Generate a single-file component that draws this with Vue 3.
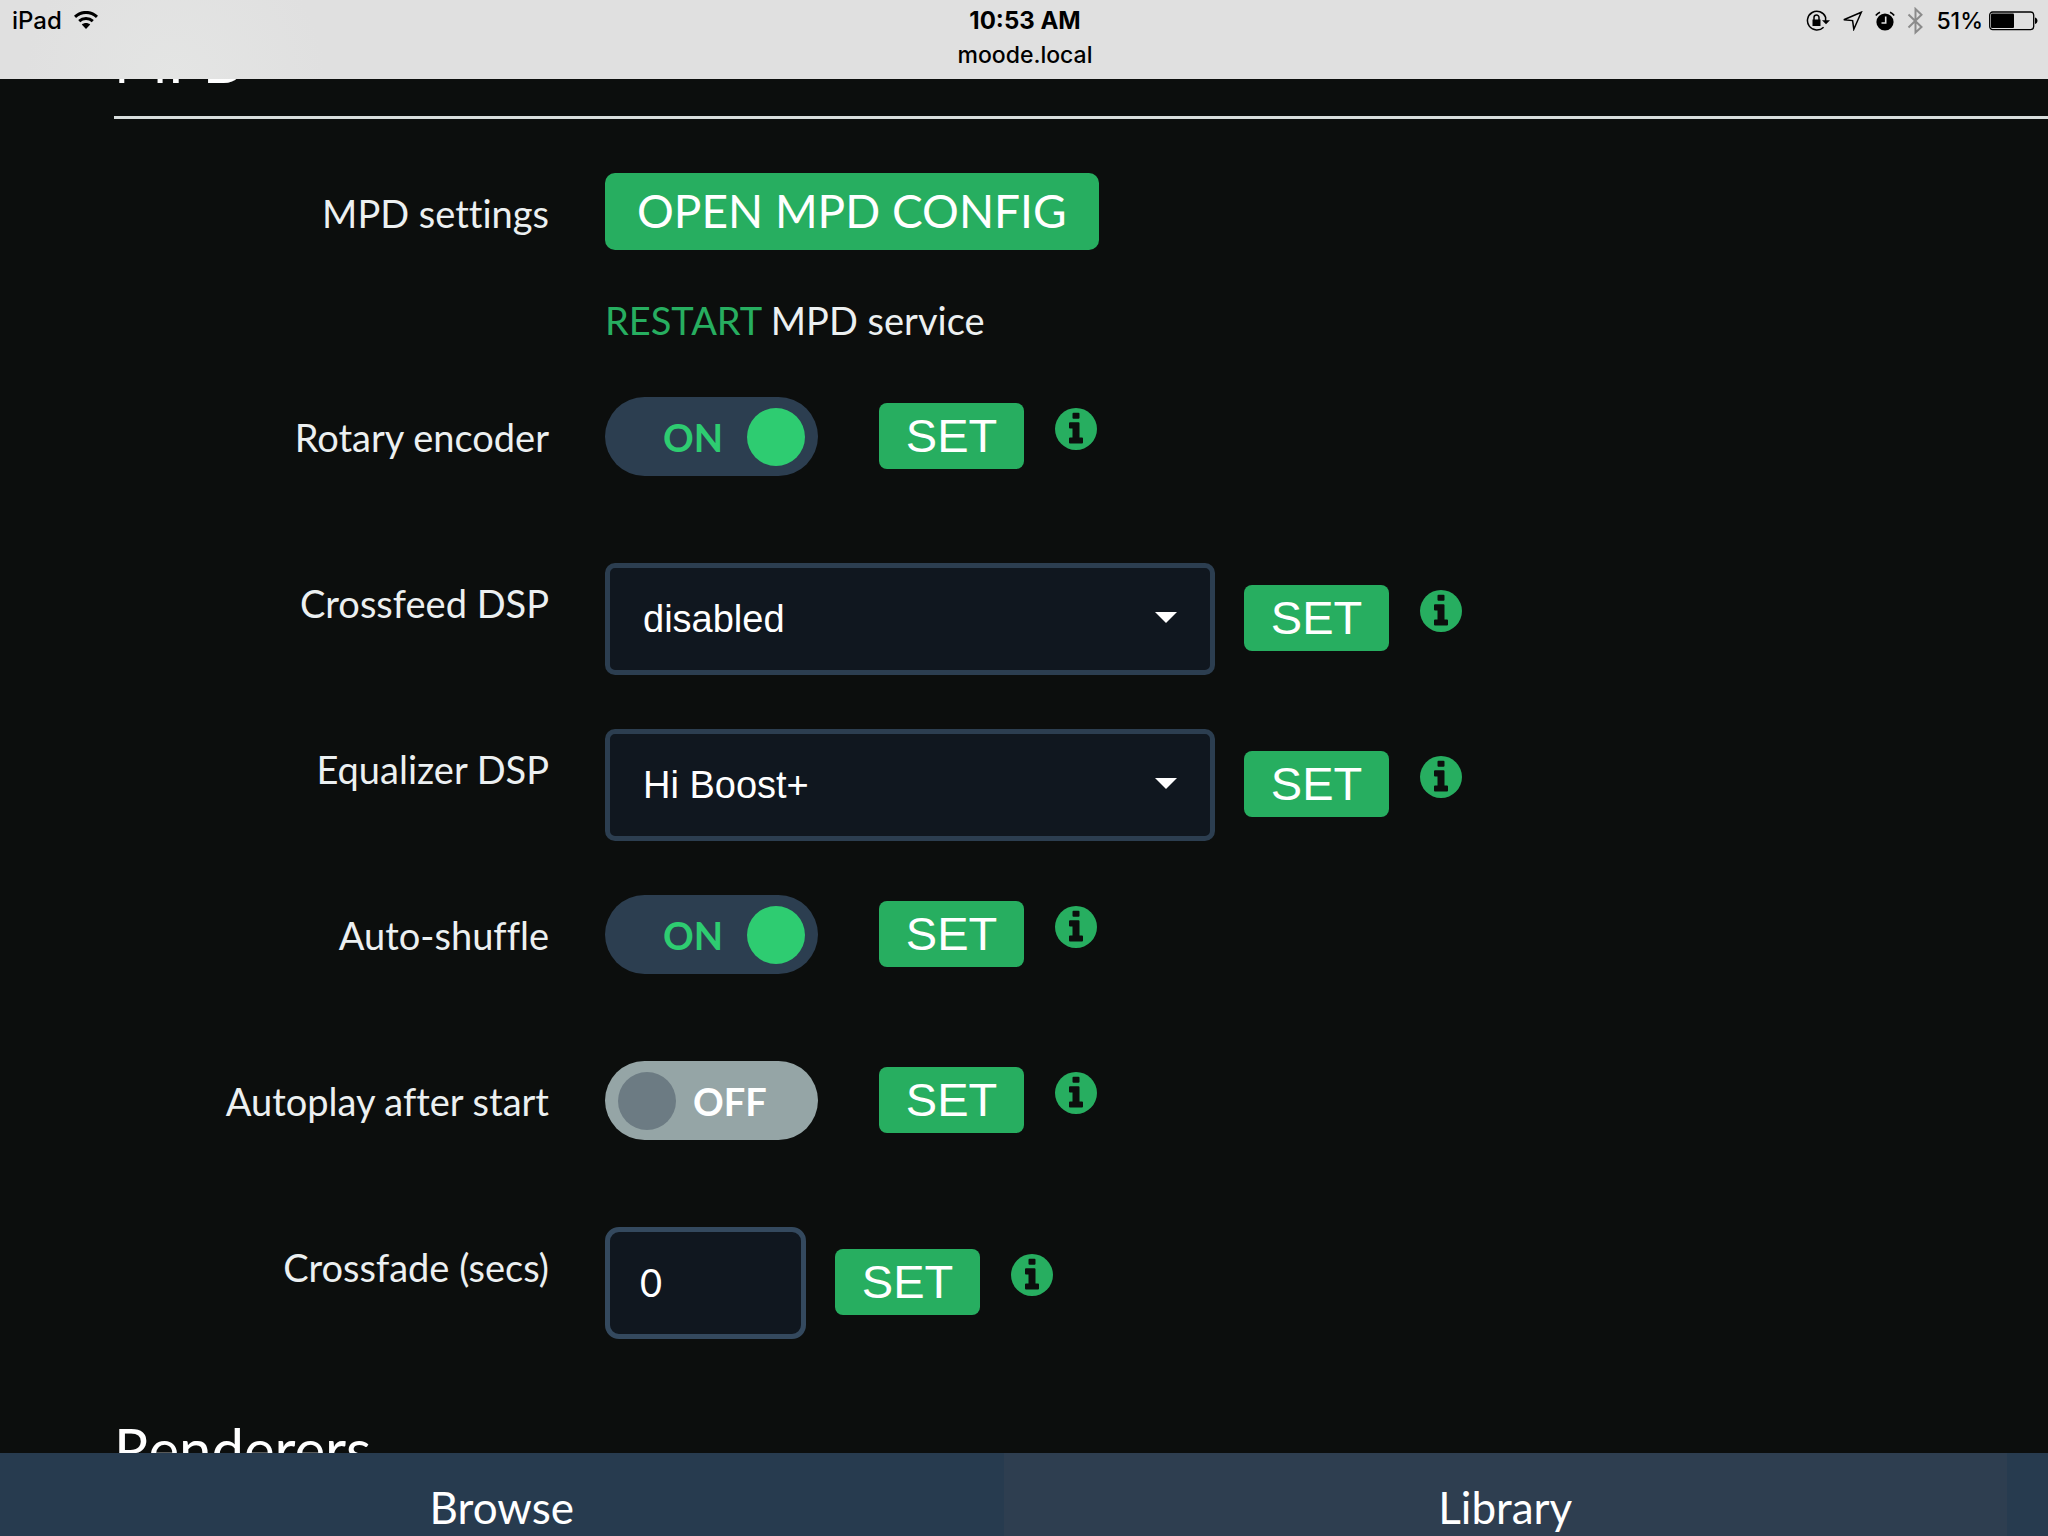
<script setup>
import { reactive } from 'vue'

const settings = reactive([
  { id: 'rotary', label: 'Rotary encoder', type: 'switch', value: true },
  { id: 'crossfeed', label: 'Crossfeed DSP', type: 'select', value: 'disabled' },
  { id: 'equalizer', label: 'Equalizer DSP', type: 'select', value: 'Hi Boost+' },
  { id: 'shuffle', label: 'Auto-shuffle', type: 'switch', value: true },
  { id: 'autoplay', label: 'Autoplay after start', type: 'switch', value: false },
  { id: 'crossfade', label: 'Crossfade (secs)', type: 'text', value: '0' }
])
</script>

<template>
  <div class="screen">
    <header class="status">
      <div class="side">
        <span class="device">iPad</span>
        <svg class="wifi" width="24" height="18" viewBox="0 0 24 18" aria-hidden="true">
          <g fill="none" stroke="#000" stroke-width="3">
            <path d="M1 5.9C7.2-.1 16.800-.1 23 5.900" />
            <path d="M5.200 10.200C9 6.700 15 6.700 18.800 10.200" />
          </g>
          <path d="M12 18L7.800 13.600C10.200 11.600 13.800 11.600 16.200 13.600Z" />
        </svg>
      </div>
      <div class="center">
        <span class="time">10:53 AM</span>
        <span>moode.local</span>
      </div>
      <div class="side right">
        <svg width="24" height="22" viewBox="0 0 24 22" aria-hidden="true">
          <path d="M19.600 7.200A9.400 9.400 0 1 0 17.600 17.200" fill="none" stroke="#000" stroke-width="1.500" />
          <path d="M19.600 7V11" fill="none" stroke="#000" stroke-width="1.500" />
          <path d="M16 10.200H24L20 14.200Z" />
          <path d="M6.500 9.500H14.500V16H6.500Z" />
          <path d="M8 10V7.500a2.500 2.500 0 0 1 5 0V10" fill="none" stroke="#000" stroke-width="1.500" />
        </svg>
        <svg width="21" height="20" viewBox="0 0 21 20" aria-hidden="true">
          <path d="M19.300 1.200L1.800 8.800L10.600 9.600L11.800 18.200Z" fill="none" stroke="#000" stroke-width="1.500" />
        </svg>
        <svg width="20" height="20" viewBox="0 0 20 20" aria-hidden="true">
          <circle cx="10" cy="11" r="8.600" />
          <path d="M.8 4.600A11 11 0 0 1 5 1.200M15 1.200A11 11 0 0 1 19.200 4.600" fill="none" stroke="#000" stroke-width="1.600" />
          <path d="M10.700 5.500V12H6.500" fill="none" stroke="#e0e0e0" stroke-width="1.600" />
        </svg>
        <svg width="17" height="28" viewBox="0 0 17 28" aria-hidden="true">
          <path d="M1.500 7.500L14.500 20L8.500 25.500V2L14.500 7.800L1.500 20.500" fill="none" stroke="#8b8b8b" stroke-width="2" />
        </svg>
        <span class="percent">51%</span>
        <svg width="49" height="20" viewBox="0 0 49 20" aria-hidden="true">
          <rect x=".7" y="1" width="44" height="17.600" rx="3" fill="none" stroke="#000" stroke-width="1.300" />
          <rect x="2" y="2.500" width="23" height="14.600" rx="1" />
          <path d="M46 6.500C49.300 7 49.300 12.500 46 13Z" />
        </svg>
      </div>
    </header>

    <main class="content">
      <h2 class="heading first">MPD</h2>

      <div class="row config">
        <span class="label">MPD settings</span>
        <button type="button" class="open">OPEN MPD CONFIG</button>
      </div>
      <div class="row restart">
        <span class="label"></span>
        <p><a href="#restart">RESTART</a> MPD service</p>
      </div>

      <form class="rows" @submit.prevent>
        <div v-for="s in settings" :key="s.id" class="row">
          <label class="label" :for="s.id">{{ s.label }}</label>
          <div class="controls" :class="s.type">
            <div v-if="s.type === 'switch'" class="toggle" :class="{ on: s.value }">
              <input :id="s.id" v-model="s.value" type="checkbox">
              <span class="state">{{ s.value ? 'ON' : 'OFF' }}</span>
              <span class="knob"></span>
            </div>
            <div v-else-if="s.type === 'select'" class="picker">
              <select :id="s.id" v-model="s.value">
                <option>{{ s.value }}</option>
              </select>
              <span class="caret"></span>
            </div>
            <input v-else :id="s.id" v-model="s.value" class="number" type="text" inputmode="numeric">

            <div class="actions">
              <button type="submit" class="set">SET</button>
              <button type="button" class="info" :aria-label="'About ' + s.label">
                <svg width="42" height="42" viewBox="0 0 42 42" aria-hidden="true">
                  <circle cx="21" cy="21" r="21" fill="#27ae60" />
                  <path d="M18.500 4.700h5a1 1 0 0 1 1 1v4a1 1 0 0 1-1 1h-5a1 1 0 0 1-1-1v-4a1 1 0 0 1 1-1ZM15 14.200h8.500a1 1 0 0 1 1 1V29.500H27a1 1 0 0 1 1 1v4a1 1 0 0 1-1 1H15a1 1 0 0 1-1-1v-4a1 1 0 0 1 1-1h2.500V20.500H15a1 1 0 0 1-1-1v-4.300a1 1 0 0 1 1-1Z" fill="#0c0e0d" />
                </svg>
              </button>
            </div>
          </div>
        </div>
      </form>

      <h2 class="heading">Renderers</h2>
    </main>

    <nav class="tabs">
      <a href="#browse" class="active">Browse</a>
      <a href="#library">Library</a>
    </nav>
  </div>
</template>

<style>
body {
  margin: 0;
  background: #0c0e0d;
}
</style>

<style scoped>
* {
  box-sizing: border-box;
}

.screen {
  display: flex;
  flex-direction: column;
  height: 100vh;
  overflow: hidden;
  background: #0c0e0d;
  color: #ecf0f1;
  font: 38px/46px Lato, "Noto Sans", sans-serif;
  font-variant-ligatures: none;
}

.status {
  display: flex;
  flex: none;
  height: 79px;
  padding: 4px 10px 0 12px;
  background: radial-gradient(circle at 175px 79px, #e4e5e4, #e0e0e0 150px);
  color: #000;
  font: 500 23px/34px Inter, "Liberation Sans", sans-serif;
}

.side {
  display: flex;
  flex: 1;
  align-items: center;
  height: 34px;
  gap: 12px;
}

.device {
  font-size: 24px;
}

.right {
  justify-content: flex-end;
}

.wifi {
  margin-bottom: 2px;
}

.percent {
  margin-right: -6px;
}

.center {
  display: flex;
  flex-direction: column;
  align-items: center;
}

.time {
  font-size: 24px;
  font-weight: 700;
}

.content {
  flex: 1;
  min-height: 0;
  overflow: hidden;
}

.heading {
  margin: 74px 0 0 114px;
  color: #fff;
  font-size: 58px;
  font-weight: 400;
  line-height: 72px;
}

.heading.first {
  height: 94px;
  margin-top: -54px;
  border-bottom: 3px solid #d8dddc;
}

.row {
  display: flex;
  align-items: flex-start;
  gap: 56px;
}

.label {
  flex: none;
  width: 549px;
  padding-top: 17px;
  text-align: right;
}

.config {
  margin-top: 54px;
}

.restart {
  margin-top: 47px;
}

.restart p {
  margin: 0;
}

a {
  color: #27ae60;
  text-decoration: none;
}

button {
  border: 0;
  color: #fff;
  background: #27ae60;
  cursor: pointer;
}

.open {
  height: 77px;
  padding: 0 32px 2px;
  border-radius: 10px;
  font: 46px/74px Lato, "Noto Sans", sans-serif;
}

.rows {
  display: flex;
  flex-direction: column;
  gap: 54px;
  margin-top: 54px;
}

.rows .row {
  height: 112px;
}

.controls {
  display: flex;
  align-items: center;
  gap: 29px;
}

.controls.switch {
  gap: 61px;
}

.actions {
  display: flex;
  align-items: center;
  gap: 31px;
  margin-bottom: 2px;
}

.set {
  width: 145px;
  height: 66px;
  padding: 0;
  border-radius: 8px;
  font: 47px/66px "Liberation Sans", sans-serif;
}

.info {
  display: flex;
  margin-bottom: 14px;
  padding: 0;
  background: none;
}

.toggle {
  display: flex;
  position: relative;
  flex-direction: row-reverse;
  align-items: center;
  justify-content: flex-end;
  gap: 17px;
  width: 213px;
  height: 79px;
  padding: 0 13px;
  border-radius: 40px;
  background: #95a5a6;
  color: #fff;
  font-weight: 700;
}

.toggle.on {
  flex-direction: row;
  gap: 24px;
  background: #2c3e50;
  color: #2ecc71;
}

.toggle input {
  position: absolute;
  inset: 0;
  width: 100%;
  height: 100%;
  margin: 0;
  opacity: 0;
  cursor: pointer;
}

.knob {
  width: 58px;
  height: 58px;
  border-radius: 50%;
  background: #6c7b83;
}

.on .knob {
  background: #2ecc71;
}

.picker {
  position: relative;
}

select,
.number {
  display: block;
  height: 112px;
  border: 5px solid #2c3e50;
  background: #10171f;
  color: #fff;
}

select {
  width: 610px;
  padding: 0 33px;
  border-radius: 10px;
  appearance: none;
  font: 38px/46px "Liberation Sans", sans-serif;
}

.caret {
  position: absolute;
  top: 49px;
  right: 38px;
  border: 11px solid transparent;
  border-top-color: #fff;
  border-bottom-width: 0;
  pointer-events: none;
}

.number {
  width: 201px;
  padding: 0 30px 2px;
  border-color: #34495e;
  border-radius: 14px;
  font: 38px/46px Lato, "Noto Sans", sans-serif;
}

.tabs {
  display: flex;
  flex: none;
  height: 83px;
  background: #273b4f;
}

.tabs a {
  flex: 0 0 49%;
  padding-top: 27px;
  background: #2e3e50;
  color: #fff;
  font-size: 44px;
  line-height: 54px;
  text-align: center;
}

.tabs .active {
  background: #273b4f;
}
</style>
